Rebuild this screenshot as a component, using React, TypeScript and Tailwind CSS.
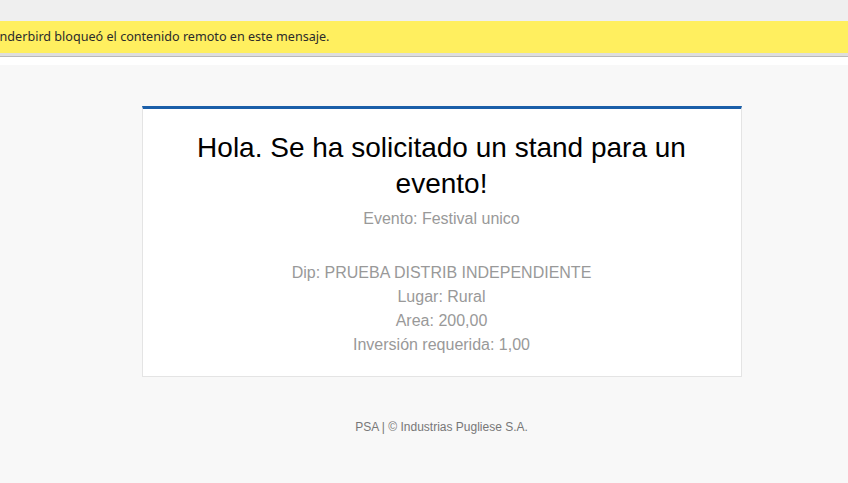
const rows = [
  "Dip: PRUEBA DISTRIB INDEPENDIENTE",
  "Lugar: Rural",
  "Area: 200,00",
  "Inversión requerida: 1,00",
];

const App = () => {
  return (
    <div className="w-[848px] h-[483px] overflow-hidden bg-[#f8f8f8]">
      <div className="h-[21px] bg-[#efefef]" />
      <div className="h-[32px] bg-[#ffef5f] flex items-center overflow-hidden whitespace-nowrap text-[12.6px] text-[#2b2b2b] font-['Noto_Sans','DejaVu_Sans',sans-serif]">
        <span className="ml-[-23px]">Thunderbird bloqueó el contenido remoto en este mensaje.</span>
      </div>
      <div className="h-[3px] bg-[#dedede]" />
      <div className="h-[1px] bg-[#b9b9b9]" />
      <div className="h-[8px] bg-white" />

      <div className="w-[883px] font-['Liberation_Sans',Arial,sans-serif] pt-[41px]">
        <div className="mx-auto w-[600px] bg-white border border-[#e4e4e4] border-t-[3px] border-t-[#1b5fa9] px-[40px] pt-[21px] pb-[19px] text-center">
          <h1 className="text-[28px] leading-[36px] text-black">
            Hola. Se ha solicitado un stand para un evento!
          </h1>
          <p className="mt-[5px] text-[16px] leading-[24px] text-[#999999]">Evento: Festival unico</p>
          <div className="mt-[30px]">
            {rows.map((r) => (
              <p key={r} className="text-[16px] leading-[24px] text-[#999999]">
                {r}
              </p>
            ))}
          </div>
        </div>
        <p className="mt-[42px] text-center text-[12px] leading-[16px] text-[#777777]">
          PSA | © Industrias Pugliese S.A.
        </p>
      </div>
    </div>
  );
};

export default App;
